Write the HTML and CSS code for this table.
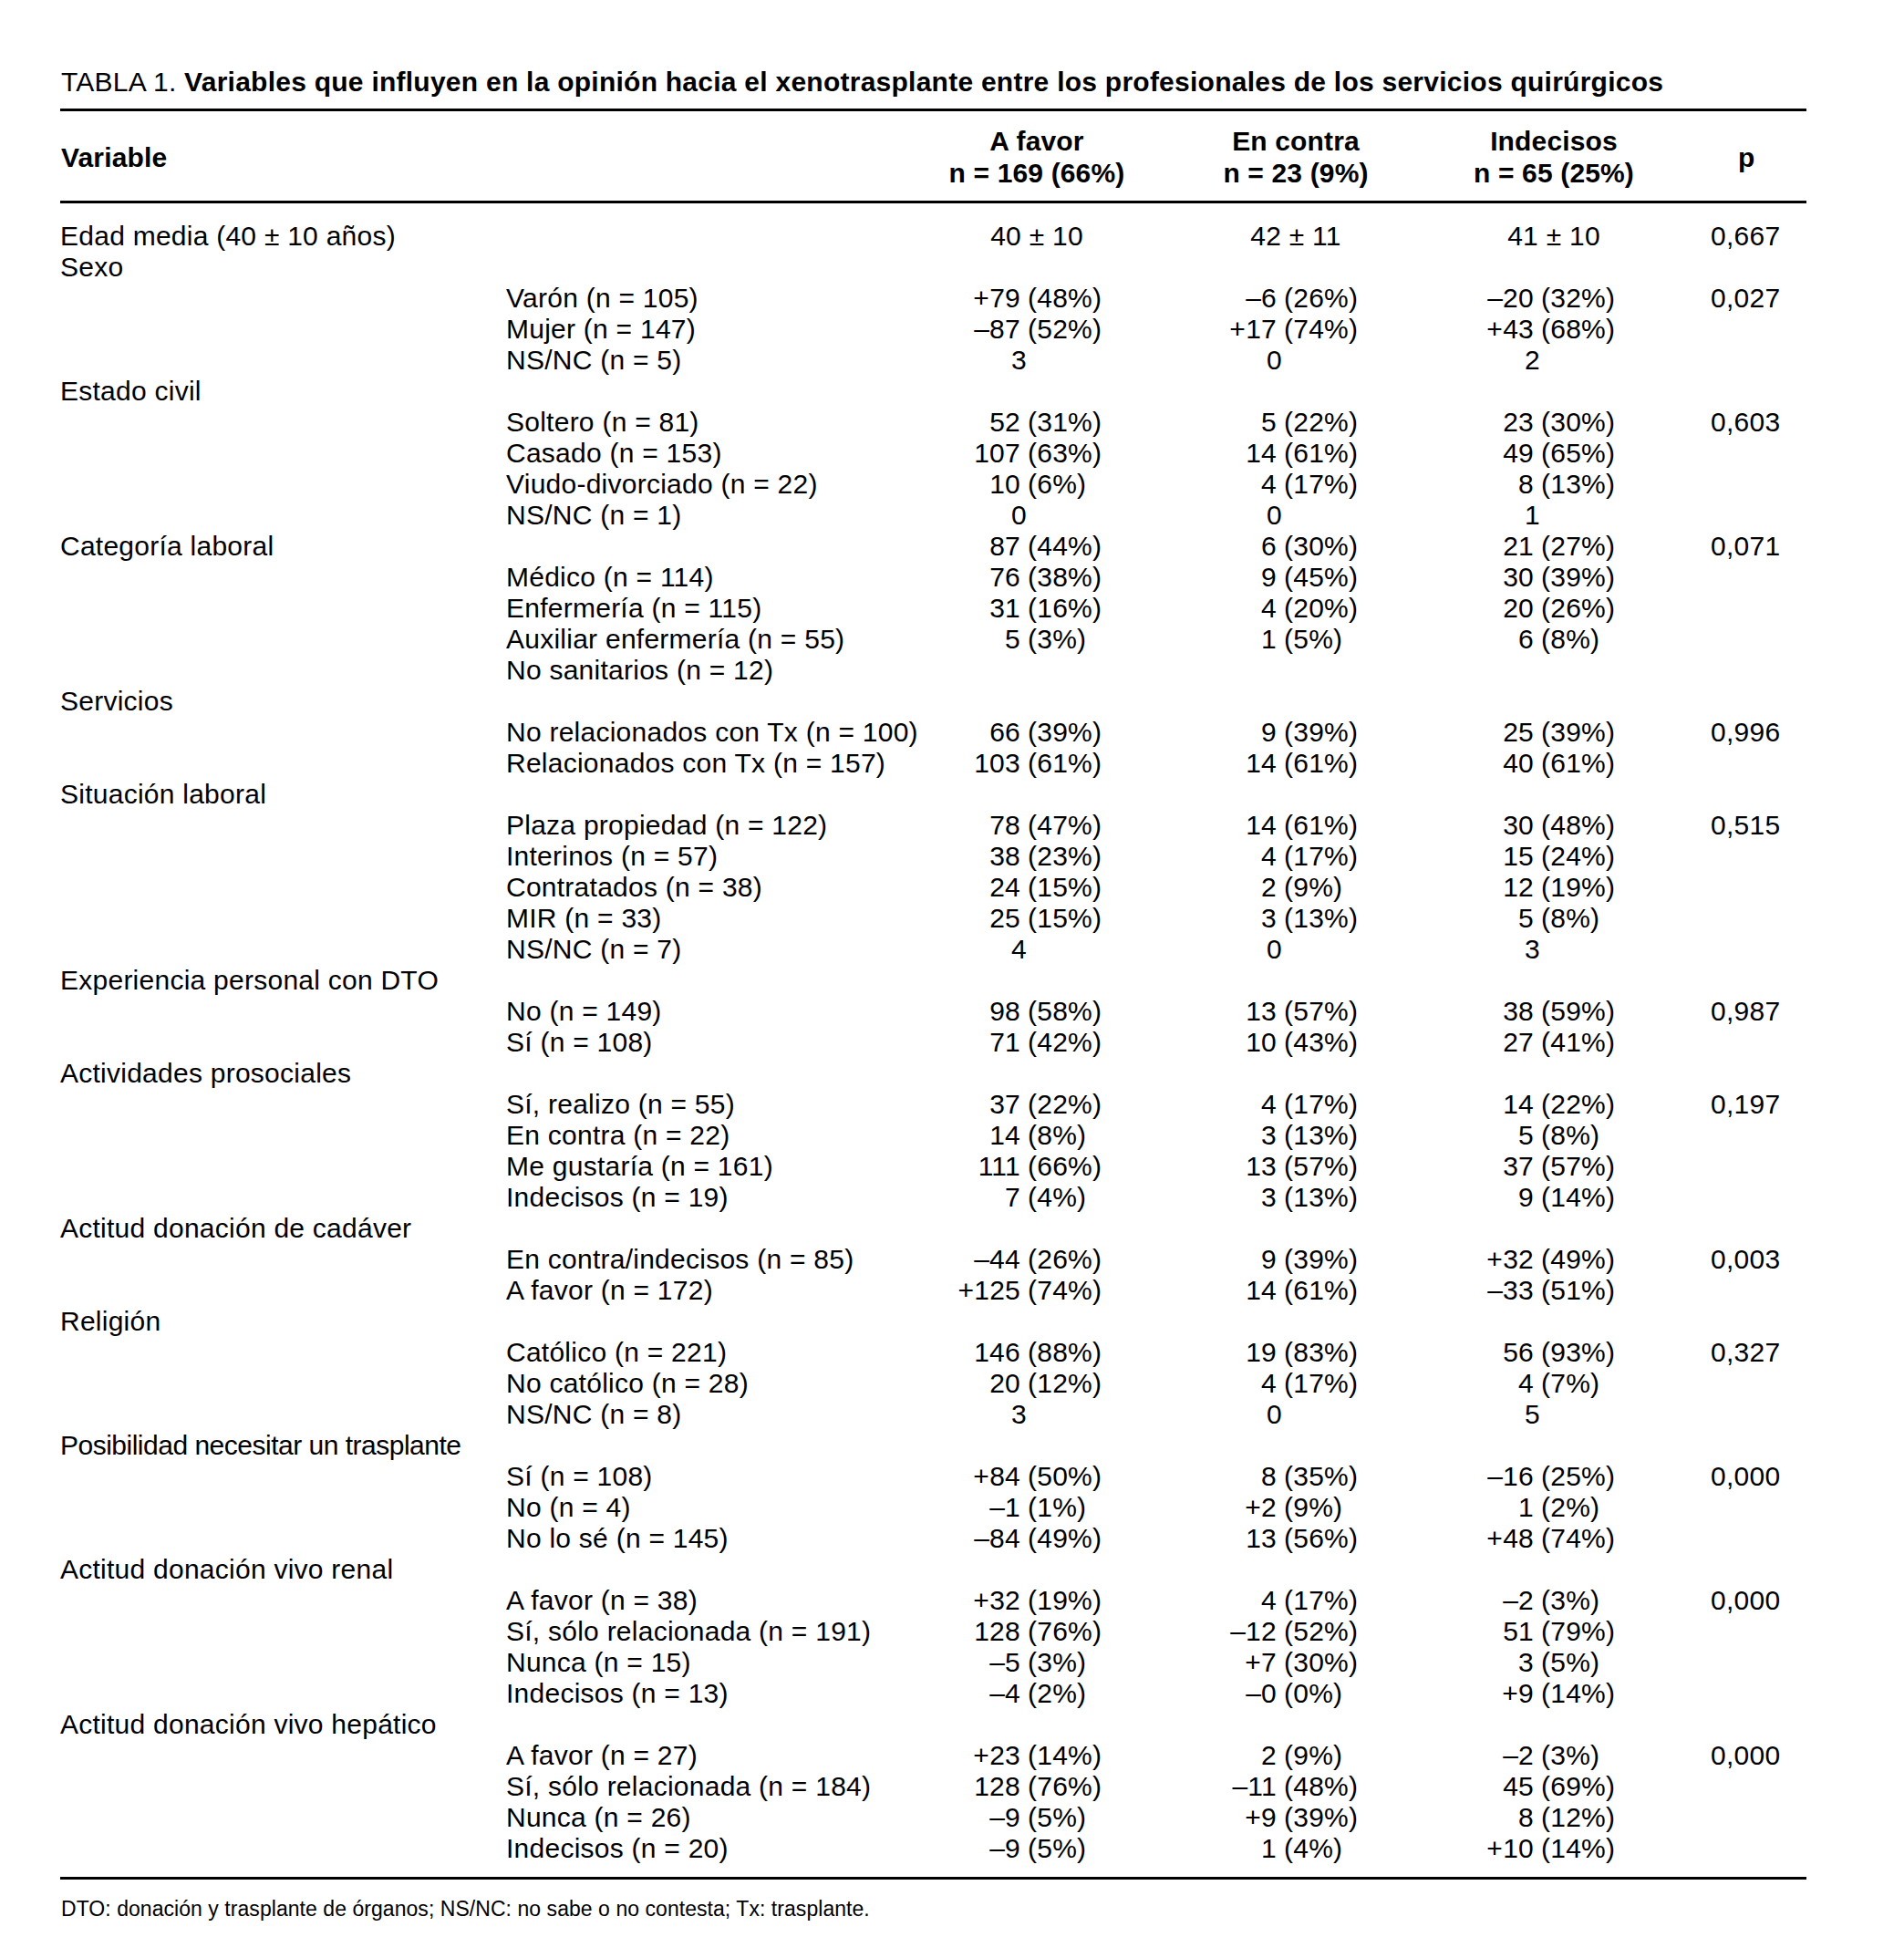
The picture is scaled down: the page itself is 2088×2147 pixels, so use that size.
FILE: index.html
```html
<!DOCTYPE html>
<html lang="es">
<head>
<meta charset="utf-8">
<title>Tabla 1</title>
<link rel="stylesheet" href="styles.css">
</head>
<body>
<div class="page">
  <div class="title">TABLA 1. <b>Variables que influyen en la opinión hacia el xenotrasplante entre los profesionales de los servicios quirúrgicos</b></div>

  <div class="thead">
    <div class="h-var">Variable</div>
    <div class="h-col">A favor<br>n = 169 (66%)</div>
    <div class="h-col">En contra<br>n = 23 (9%)</div>
    <div class="h-col">Indecisos<br>n = 65 (25%)</div>
    <div class="h-p">p</div>
  </div>

  <div class="tbody">
    <div class="row"><div class="l">Edad media (40 ± 10 años)</div><div class="s"></div><div class="m">40 ± 10</div><div class="m">42 ± 11</div><div class="m">41 ± 10</div><div class="pv">0,667</div></div>
    <div class="row"><div class="l">Sexo</div></div>
    <div class="row"><div class="l"></div><div class="s">Varón (n = 105)</div><div class="v a"><span class="n">+79</span><span class="pc">(48%)</span></div><div class="v b"><span class="n">–6</span><span class="pc">(26%)</span></div><div class="v c"><span class="n">–20</span><span class="pc">(32%)</span></div><div class="pv">0,027</div></div>
    <div class="row"><div class="l"></div><div class="s">Mujer (n = 147)</div><div class="v a"><span class="n">–87</span><span class="pc">(52%)</span></div><div class="v b"><span class="n">+17</span><span class="pc">(74%)</span></div><div class="v c"><span class="n">+43</span><span class="pc">(68%)</span></div></div>
    <div class="row"><div class="l"></div><div class="s">NS/NC (n = 5)</div><div class="v a"><span class="n solo">3</span></div><div class="v b"><span class="n solo">0</span></div><div class="v c"><span class="n solo">2</span></div></div>
    <div class="row"><div class="l">Estado civil</div></div>
    <div class="row"><div class="l"></div><div class="s">Soltero (n = 81)</div><div class="v a"><span class="n">52</span><span class="pc">(31%)</span></div><div class="v b"><span class="n">5</span><span class="pc">(22%)</span></div><div class="v c"><span class="n">23</span><span class="pc">(30%)</span></div><div class="pv">0,603</div></div>
    <div class="row"><div class="l"></div><div class="s">Casado (n = 153)</div><div class="v a"><span class="n">107</span><span class="pc">(63%)</span></div><div class="v b"><span class="n">14</span><span class="pc">(61%)</span></div><div class="v c"><span class="n">49</span><span class="pc">(65%)</span></div></div>
    <div class="row"><div class="l"></div><div class="s">Viudo-divorciado (n = 22)</div><div class="v a"><span class="n">10</span><span class="pc">(6%)</span></div><div class="v b"><span class="n">4</span><span class="pc">(17%)</span></div><div class="v c"><span class="n">8</span><span class="pc">(13%)</span></div></div>
    <div class="row"><div class="l"></div><div class="s">NS/NC (n = 1)</div><div class="v a"><span class="n solo">0</span></div><div class="v b"><span class="n solo">0</span></div><div class="v c"><span class="n solo">1</span></div></div>
    <div class="row"><div class="l">Categoría laboral</div><div class="s"></div><div class="v a"><span class="n">87</span><span class="pc">(44%)</span></div><div class="v b"><span class="n">6</span><span class="pc">(30%)</span></div><div class="v c"><span class="n">21</span><span class="pc">(27%)</span></div><div class="pv">0,071</div></div>
    <div class="row"><div class="l"></div><div class="s">Médico (n = 114)</div><div class="v a"><span class="n">76</span><span class="pc">(38%)</span></div><div class="v b"><span class="n">9</span><span class="pc">(45%)</span></div><div class="v c"><span class="n">30</span><span class="pc">(39%)</span></div></div>
    <div class="row"><div class="l"></div><div class="s">Enfermería (n = 115)</div><div class="v a"><span class="n">31</span><span class="pc">(16%)</span></div><div class="v b"><span class="n">4</span><span class="pc">(20%)</span></div><div class="v c"><span class="n">20</span><span class="pc">(26%)</span></div></div>
    <div class="row"><div class="l"></div><div class="s">Auxiliar enfermería (n = 55)</div><div class="v a"><span class="n">5</span><span class="pc">(3%)</span></div><div class="v b"><span class="n">1</span><span class="pc">(5%)</span></div><div class="v c"><span class="n">6</span><span class="pc">(8%)</span></div></div>
    <div class="row"><div class="l"></div><div class="s">No sanitarios (n = 12)</div></div>
    <div class="row"><div class="l">Servicios</div></div>
    <div class="row"><div class="l"></div><div class="s">No relacionados con Tx (n = 100)</div><div class="v a"><span class="n">66</span><span class="pc">(39%)</span></div><div class="v b"><span class="n">9</span><span class="pc">(39%)</span></div><div class="v c"><span class="n">25</span><span class="pc">(39%)</span></div><div class="pv">0,996</div></div>
    <div class="row"><div class="l"></div><div class="s">Relacionados con Tx (n = 157)</div><div class="v a"><span class="n">103</span><span class="pc">(61%)</span></div><div class="v b"><span class="n">14</span><span class="pc">(61%)</span></div><div class="v c"><span class="n">40</span><span class="pc">(61%)</span></div></div>
    <div class="row"><div class="l">Situación laboral</div></div>
    <div class="row"><div class="l"></div><div class="s">Plaza propiedad (n = 122)</div><div class="v a"><span class="n">78</span><span class="pc">(47%)</span></div><div class="v b"><span class="n">14</span><span class="pc">(61%)</span></div><div class="v c"><span class="n">30</span><span class="pc">(48%)</span></div><div class="pv">0,515</div></div>
    <div class="row"><div class="l"></div><div class="s">Interinos (n = 57)</div><div class="v a"><span class="n">38</span><span class="pc">(23%)</span></div><div class="v b"><span class="n">4</span><span class="pc">(17%)</span></div><div class="v c"><span class="n">15</span><span class="pc">(24%)</span></div></div>
    <div class="row"><div class="l"></div><div class="s">Contratados (n = 38)</div><div class="v a"><span class="n">24</span><span class="pc">(15%)</span></div><div class="v b"><span class="n">2</span><span class="pc">(9%)</span></div><div class="v c"><span class="n">12</span><span class="pc">(19%)</span></div></div>
    <div class="row"><div class="l"></div><div class="s">MIR (n = 33)</div><div class="v a"><span class="n">25</span><span class="pc">(15%)</span></div><div class="v b"><span class="n">3</span><span class="pc">(13%)</span></div><div class="v c"><span class="n">5</span><span class="pc">(8%)</span></div></div>
    <div class="row"><div class="l"></div><div class="s">NS/NC (n = 7)</div><div class="v a"><span class="n solo">4</span></div><div class="v b"><span class="n solo">0</span></div><div class="v c"><span class="n solo">3</span></div></div>
    <div class="row"><div class="l">Experiencia personal con DTO</div></div>
    <div class="row"><div class="l"></div><div class="s">No (n = 149)</div><div class="v a"><span class="n">98</span><span class="pc">(58%)</span></div><div class="v b"><span class="n">13</span><span class="pc">(57%)</span></div><div class="v c"><span class="n">38</span><span class="pc">(59%)</span></div><div class="pv">0,987</div></div>
    <div class="row"><div class="l"></div><div class="s">Sí (n = 108)</div><div class="v a"><span class="n">71</span><span class="pc">(42%)</span></div><div class="v b"><span class="n">10</span><span class="pc">(43%)</span></div><div class="v c"><span class="n">27</span><span class="pc">(41%)</span></div></div>
    <div class="row"><div class="l">Actividades prosociales</div></div>
    <div class="row"><div class="l"></div><div class="s">Sí, realizo (n = 55)</div><div class="v a"><span class="n">37</span><span class="pc">(22%)</span></div><div class="v b"><span class="n">4</span><span class="pc">(17%)</span></div><div class="v c"><span class="n">14</span><span class="pc">(22%)</span></div><div class="pv">0,197</div></div>
    <div class="row"><div class="l"></div><div class="s">En contra (n = 22)</div><div class="v a"><span class="n">14</span><span class="pc">(8%)</span></div><div class="v b"><span class="n">3</span><span class="pc">(13%)</span></div><div class="v c"><span class="n">5</span><span class="pc">(8%)</span></div></div>
    <div class="row"><div class="l"></div><div class="s">Me gustaría (n = 161)</div><div class="v a"><span class="n">111</span><span class="pc">(66%)</span></div><div class="v b"><span class="n">13</span><span class="pc">(57%)</span></div><div class="v c"><span class="n">37</span><span class="pc">(57%)</span></div></div>
    <div class="row"><div class="l"></div><div class="s">Indecisos (n = 19)</div><div class="v a"><span class="n">7</span><span class="pc">(4%)</span></div><div class="v b"><span class="n">3</span><span class="pc">(13%)</span></div><div class="v c"><span class="n">9</span><span class="pc">(14%)</span></div></div>
    <div class="row"><div class="l">Actitud donación de cadáver</div></div>
    <div class="row"><div class="l"></div><div class="s">En contra/indecisos (n = 85)</div><div class="v a"><span class="n">–44</span><span class="pc">(26%)</span></div><div class="v b"><span class="n">9</span><span class="pc">(39%)</span></div><div class="v c"><span class="n">+32</span><span class="pc">(49%)</span></div><div class="pv">0,003</div></div>
    <div class="row"><div class="l"></div><div class="s">A favor (n = 172)</div><div class="v a"><span class="n">+125</span><span class="pc">(74%)</span></div><div class="v b"><span class="n">14</span><span class="pc">(61%)</span></div><div class="v c"><span class="n">–33</span><span class="pc">(51%)</span></div></div>
    <div class="row"><div class="l">Religión</div></div>
    <div class="row"><div class="l"></div><div class="s">Católico (n = 221)</div><div class="v a"><span class="n">146</span><span class="pc">(88%)</span></div><div class="v b"><span class="n">19</span><span class="pc">(83%)</span></div><div class="v c"><span class="n">56</span><span class="pc">(93%)</span></div><div class="pv">0,327</div></div>
    <div class="row"><div class="l"></div><div class="s">No católico (n = 28)</div><div class="v a"><span class="n">20</span><span class="pc">(12%)</span></div><div class="v b"><span class="n">4</span><span class="pc">(17%)</span></div><div class="v c"><span class="n">4</span><span class="pc">(7%)</span></div></div>
    <div class="row"><div class="l"></div><div class="s">NS/NC (n = 8)</div><div class="v a"><span class="n solo">3</span></div><div class="v b"><span class="n solo">0</span></div><div class="v c"><span class="n solo">5</span></div></div>
    <div class="row"><div class="l tight">Posibilidad necesitar un trasplante</div></div>
    <div class="row"><div class="l"></div><div class="s">Sí (n = 108)</div><div class="v a"><span class="n">+84</span><span class="pc">(50%)</span></div><div class="v b"><span class="n">8</span><span class="pc">(35%)</span></div><div class="v c"><span class="n">–16</span><span class="pc">(25%)</span></div><div class="pv">0,000</div></div>
    <div class="row"><div class="l"></div><div class="s">No (n = 4)</div><div class="v a"><span class="n">–1</span><span class="pc">(1%)</span></div><div class="v b"><span class="n">+2</span><span class="pc">(9%)</span></div><div class="v c"><span class="n">1</span><span class="pc">(2%)</span></div></div>
    <div class="row"><div class="l"></div><div class="s">No lo sé (n = 145)</div><div class="v a"><span class="n">–84</span><span class="pc">(49%)</span></div><div class="v b"><span class="n">13</span><span class="pc">(56%)</span></div><div class="v c"><span class="n">+48</span><span class="pc">(74%)</span></div></div>
    <div class="row"><div class="l">Actitud donación vivo renal</div></div>
    <div class="row"><div class="l"></div><div class="s">A favor (n = 38)</div><div class="v a"><span class="n">+32</span><span class="pc">(19%)</span></div><div class="v b"><span class="n">4</span><span class="pc">(17%)</span></div><div class="v c"><span class="n">–2</span><span class="pc">(3%)</span></div><div class="pv">0,000</div></div>
    <div class="row"><div class="l"></div><div class="s">Sí, sólo relacionada (n = 191)</div><div class="v a"><span class="n">128</span><span class="pc">(76%)</span></div><div class="v b"><span class="n">–12</span><span class="pc">(52%)</span></div><div class="v c"><span class="n">51</span><span class="pc">(79%)</span></div></div>
    <div class="row"><div class="l"></div><div class="s">Nunca (n = 15)</div><div class="v a"><span class="n">–5</span><span class="pc">(3%)</span></div><div class="v b"><span class="n">+7</span><span class="pc">(30%)</span></div><div class="v c"><span class="n">3</span><span class="pc">(5%)</span></div></div>
    <div class="row"><div class="l"></div><div class="s">Indecisos (n = 13)</div><div class="v a"><span class="n">–4</span><span class="pc">(2%)</span></div><div class="v b"><span class="n">–0</span><span class="pc">(0%)</span></div><div class="v c"><span class="n">+9</span><span class="pc">(14%)</span></div></div>
    <div class="row"><div class="l">Actitud donación vivo hepático</div></div>
    <div class="row"><div class="l"></div><div class="s">A favor (n = 27)</div><div class="v a"><span class="n">+23</span><span class="pc">(14%)</span></div><div class="v b"><span class="n">2</span><span class="pc">(9%)</span></div><div class="v c"><span class="n">–2</span><span class="pc">(3%)</span></div><div class="pv">0,000</div></div>
    <div class="row"><div class="l"></div><div class="s">Sí, sólo relacionada (n = 184)</div><div class="v a"><span class="n">128</span><span class="pc">(76%)</span></div><div class="v b"><span class="n">–11</span><span class="pc">(48%)</span></div><div class="v c"><span class="n">45</span><span class="pc">(69%)</span></div></div>
    <div class="row"><div class="l"></div><div class="s">Nunca (n = 26)</div><div class="v a"><span class="n">–9</span><span class="pc">(5%)</span></div><div class="v b"><span class="n">+9</span><span class="pc">(39%)</span></div><div class="v c"><span class="n">8</span><span class="pc">(12%)</span></div></div>
    <div class="row"><div class="l"></div><div class="s">Indecisos (n = 20)</div><div class="v a"><span class="n">–9</span><span class="pc">(5%)</span></div><div class="v b"><span class="n">1</span><span class="pc">(4%)</span></div><div class="v c"><span class="n">+10</span><span class="pc">(14%)</span></div></div>
  </div>

  <div class="foot">DTO: donación y trasplante de órganos; NS/NC: no sabe o no contesta; Tx: trasplante.</div>
</div>
</body>
</html>
```

FILE: styles.css
```css
html, body {
  margin: 0;
  padding: 0;
  background: #ffffff;
}

body {
  color: #000000;
  font-family: "Liberation Sans", Arial, Helvetica, sans-serif;
  font-size: 30px;
  letter-spacing: 0.25px;
}

.page {
  width: 1915px;
  padding: 73px 0 0 66px;
}

.title {
  line-height: 34px;
  margin: 0 0 12px 1px;
  white-space: nowrap;
  letter-spacing: 0.25px;
}

.title b {
  font-weight: bold;
}

.thead,
.row {
  display: grid;
  grid-template-columns: 489px 447px 270px 298px 268px 143px;
}

.thead {
  border-top: 3px solid #000;
  border-bottom: 3px solid #000;
  padding: 15px 0 13px;
  font-weight: bold;
  line-height: 35px;
  letter-spacing: 0.15px;
}

.h-var {
  grid-column: 1 / 3;
  align-self: center;
  padding-left: 1px;
}

.h-col {
  text-align: center;
}

.h-p {
  align-self: center;
  padding-left: 68px;
}

.tbody {
  padding: 19px 0 14px;
  border-bottom: 3px solid #000;
}

.row {
  height: 34px;
  line-height: 34px;
  white-space: nowrap;
}

.l {
  grid-column: 1;
}

.l.tight {
  letter-spacing: -0.5px;
}

.s {
  grid-column: 2;
}

.m {
  text-align: center;
}

.v {
  display: flex;
}

.n {
  display: inline-block;
  text-align: right;
}

.pc {
  margin-left: 8px;
}

.v.a .n { width: 117px; }
.v.b .n { width: 128px; }
.v.c .n { width: 112px; }

.v.a .n.solo { width: 124px; }
.v.b .n.solo { width: 134px; }
.v.c .n.solo { width: 119px; }

.pv {
  grid-column: 6;
  padding-left: 38px;
}

.foot {
  margin-top: 19px;
  font-size: 23px;
  line-height: 26px;
  padding-left: 1px;
  letter-spacing: 0.05px;
}
```
